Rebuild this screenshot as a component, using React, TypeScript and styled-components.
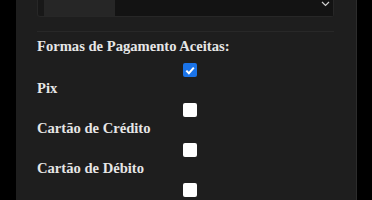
import React, { useState } from "react";
import styled, { createGlobalStyle } from "styled-components";

const GlobalStyle = createGlobalStyle`
    html, body {
        margin: 0;
        padding: 0;
        background: #000;
    }
    body {
        font-family: "Liberation Serif", "DejaVu Serif", serif;
    }
`;

const Page = styled.div`
    width: 372px;
    height: 200px;
    overflow: hidden;
    background: #000;
    display: flex;
    align-items: flex-start;
`;

const Panel = styled.div`
    margin-left: 16px;
    width: 341px;
    min-height: 200px;
    flex-shrink: 0;
    background: #1e1e1e;
    border-right: 1px solid #2c2c2c;
    padding: 0 22px 0 21px;
    box-sizing: border-box;
`;

const SelectBox = styled.div`
    height: 17px;
    border: 1px solid #272727;
    border-top: none;
    border-radius: 0 0 3px 3px;
    display: flex;
    background: #181818;
    padding-left: 6px;
    box-sizing: border-box;
`;

const Thumb = styled.div`
    width: 71px;
    background: #262626;
`;

const SelectField = styled.div`
    flex: 1;
    background: #131313;
    position: relative;
`;

const Chevron = styled.svg`
    position: absolute;
    right: 3px;
    top: 1px;
`;

const Divider = styled.hr`
    margin: 14px 0 0;
    border: none;
    border-top: 1px solid #282828;
`;

const Heading = styled.div`
    margin: 6px 0 2px;
    color: #e6e6e6;
    font-size: 14.6px;
    font-weight: bold;
    line-height: 16px;
`;

const OptionList = styled.div`
    display: flex;
    flex-direction: column;
`;

const Option = styled.label`
    display: flex;
    flex-direction: column;
    cursor: pointer;
`;

const Box = styled.span<{ $checked: boolean }>`
    margin: 7px 0 0 146px;
    width: 14px;
    height: 14px;
    border-radius: 2px;
    background: ${(p) => (p.$checked ? "#1a73e8" : "#ffffff")};
    display: flex;
    align-items: center;
    justify-content: center;
`;

const Label = styled.span`
    margin-top: 3px;
    color: #e6e6e6;
    font-size: 14.6px;
    font-weight: bold;
    line-height: 16px;
`;

const options = ["Pix", "Cartão de Crédito", "Cartão de Débito", "Dinheiro"];

export default function App() {
    const [checked, setChecked] = useState<boolean[]>([true, false, false, false]);

    const toggle = (i: number) => {
        setChecked(checked.map((c, j) => (j === i ? !c : c)));
    };

    return (
        <>
            <GlobalStyle />
            <Page>
                <Panel>
                    <SelectBox>
                        <Thumb />
                        <SelectField>
                            <Chevron width="9" height="6" viewBox="0 0 9 6">
                                <path d="M1 1l3.5 3.5L8 1" stroke="#d0d0d0" strokeWidth="1.2" fill="none" />
                            </Chevron>
                        </SelectField>
                    </SelectBox>
                    <Divider />
                    <Heading>Formas de Pagamento Aceitas:</Heading>
                    <OptionList>
                        {options.map((o, i) => (
                            <Option key={o} onClick={() => toggle(i)}>
                                <Box $checked={checked[i]}>
                                    {checked[i] && (
                                        <svg width="10" height="9" viewBox="0 0 10 9">
                                            <path d="M1.3 4.6l2.6 2.6L8.8 1.6" stroke="#fff" strokeWidth="2" fill="none" />
                                        </svg>
                                    )}
                                </Box>
                                <Label>{o}</Label>
                            </Option>
                        ))}
                    </OptionList>
                </Panel>
            </Page>
        </>
    );
}
